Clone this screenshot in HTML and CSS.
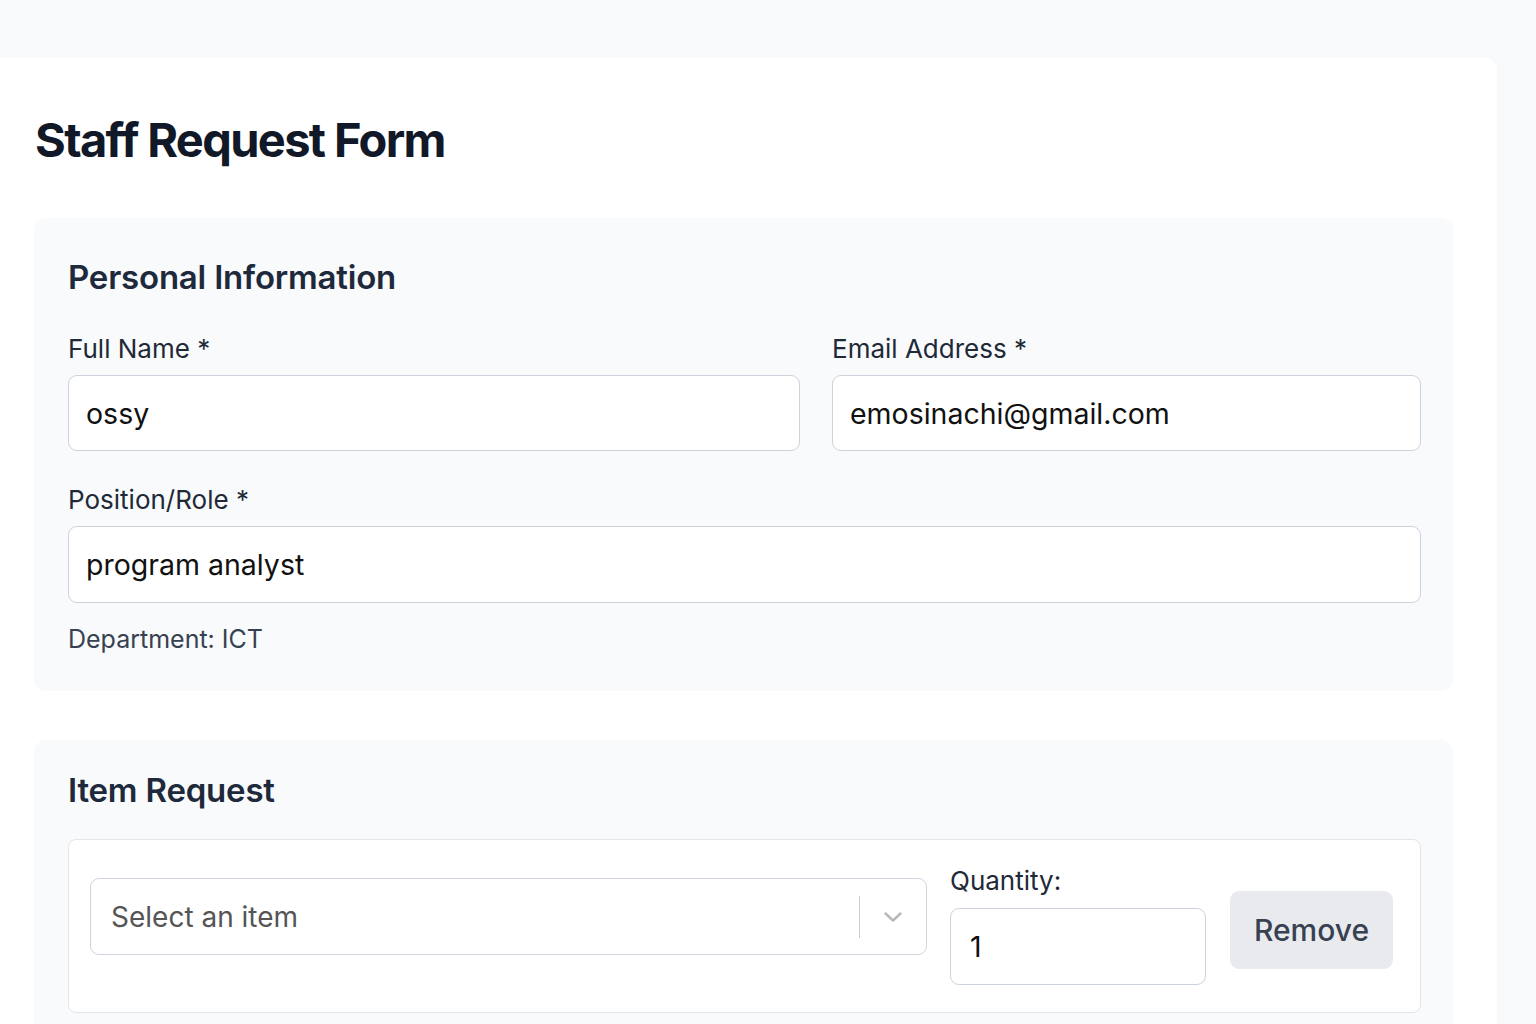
FILE: index.html
```html
<!DOCTYPE html>
<html lang="en">
<head>
<meta charset="utf-8">
<title>Staff Request Form</title>
<link rel="stylesheet" href="styles.css">
</head>
<body>
<main class="card">
  <h1 class="title">Staff Request Form</h1>

  <section class="section section--personal">
    <h2 class="section-title">Personal Information</h2>
    <div class="row-2">
      <div class="field">
        <label class="label">Full Name *</label>
        <div class="input">ossy</div>
      </div>
      <div class="field">
        <label class="label">Email Address *</label>
        <div class="input">emosinachi@gmail.com</div>
      </div>
    </div>
    <div class="field field--gap">
      <label class="label">Position/Role *</label>
      <div class="input">program analyst</div>
    </div>
    <p class="dept">Department: ICT</p>
  </section>

  <section class="section section--items">
    <h2 class="section-title">Item Request</h2>
    <div class="item-row">
      <div class="select">
        <span class="placeholder">Select an item</span>
        <span class="sep"></span>
        <span class="chev">
          <svg width="20" height="20" viewBox="0 0 20 20"><path d="M2.5 6.5 L10 13.5 L17.5 6.5" fill="none" stroke="#b8b8b8" stroke-width="2.4" stroke-linecap="round" stroke-linejoin="round"/></svg>
        </span>
      </div>
      <div class="qty">
        <label class="label">Quantity:</label>
        <div class="input input--qty">1</div>
      </div>
      <button class="remove">Remove</button>
    </div>
  </section>
</main>
</body>
</html>
```

FILE: styles.css
```css
* { box-sizing: border-box; }
html, body { margin: 0; padding: 0; }
body {
  background: #f8f9fb;
  font-family: Inter, "Noto Sans", "Liberation Sans", sans-serif;
  color: #1f2937;
  height: 1024px;
  overflow: hidden;
}
.card {
  width: 1497px;
  margin-top: 58px;
  background: #ffffff;
  border-radius: 0 12px 0 0;
  padding: 53px 44px 0 34px;
  min-height: 1100px;
}
.title {
  margin: 0 0 49px 1px;
  font-size: 47px;
  line-height: 58px;
  font-weight: 700;
  letter-spacing: -0.035em;
  color: #111827;
}
.section {
  background: #f8fafc;
  border-radius: 12px;
  padding: 39px 32px 37px 34px;
}
.section--items {
  margin-top: 49px;
  padding-top: 30px;
  padding-bottom: 40px;
}
.section-title {
  margin: 0;
  font-size: 33px;
  line-height: 40px;
  font-weight: 600;
  letter-spacing: -0.2px;
  color: #1e293b;
}
.section--personal .section-title { margin-bottom: 37px; }
.section--items .section-title { margin-bottom: 29px; }
.row-2 {
  display: grid;
  grid-template-columns: 732fr 589fr;
  column-gap: 32px;
}
.field { display: flex; flex-direction: column; }
.field--gap { margin-top: 34px; }
.label {
  font-size: 26px;
  line-height: 30px;
  color: #1f2937;
  margin-bottom: 11px;
}
.input {
  height: 76px;
  border: 1px solid #cdd3dc;
  border-radius: 9px;
  background: #ffffff;
  padding: 0 17px;
  display: flex;
  align-items: center;
  font-size: 28.5px;
  color: #111111;
}
.field--gap .input { height: 77px; }
.dept {
  margin: 21px 0 0;
  font-size: 25px;
  line-height: 30px;
  color: #374151;
}
.item-row {
  display: flex;
  align-items: center;
  background: #ffffff;
  border: 1px solid #e2e6ec;
  border-radius: 8px;
  padding: 26px 27px 27px 21px;
}
.select {
  flex: 1;
  height: 77px;
  margin-bottom: 18px;
  border: 1px solid #cfd5df;
  border-radius: 9px;
  background: #ffffff;
  display: flex;
  align-items: center;
  padding-left: 20px;
}
.placeholder {
  flex: 1;
  font-size: 28px;
  color: #555555;
}
.sep {
  width: 1px;
  height: 42px;
  background: #cccccc;
}
.chev {
  width: 66px;
  display: flex;
  justify-content: center;
  align-items: center;
}
.qty {
  width: 256px;
  margin-left: 23px;
  display: flex;
  flex-direction: column;
}
.qty .label { margin-bottom: 12px; }
.input--qty { height: 77px; padding-left: 19px; }
.remove {
  margin-left: 24px;
  margin-top: 9px;
  width: 163px;
  height: 78px;
  border: none;
  border-radius: 9px;
  background: #e8eaee;
  font-family: Inter, "Noto Sans", "Liberation Sans", sans-serif;
  font-size: 30px;
  font-weight: 500;
  color: #374151;
  padding: 0;
}
```
